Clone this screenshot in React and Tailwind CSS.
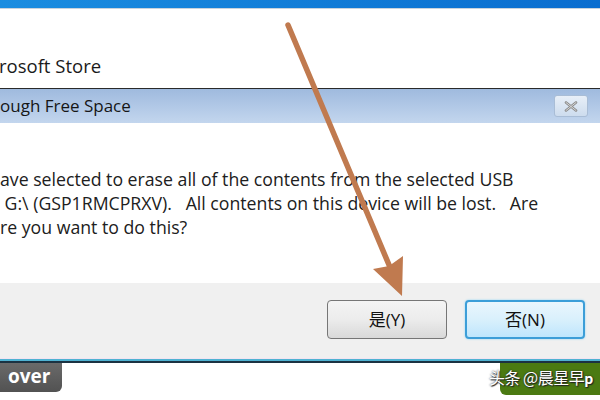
export default function App() {
  const font = { fontFamily: '"Open Sans", "Noto Sans CJK SC", sans-serif' };
  return (
    <div className="relative w-[600px] h-[400px] overflow-hidden bg-white flex flex-col" style={font}>
      <div className="h-[8px] bg-gradient-to-r from-[#1b8de0] to-[#0a6dcf]" />
      <div className="h-px bg-[#c9d3dc]" />
      <div className="h-[79px] flex items-end pb-[10px]">
        <span className="text-[18.5px] leading-[24px] text-[#1a1a1a] -ml-[1px]">rosoft Store</span>
      </div>
      <div className="h-px bg-[#2a2a2a]" />
      <div className="h-[34px] bg-gradient-to-b from-[#9fbade] to-[#c3d6ee] flex items-center justify-between pr-[12px]">
        <span className="text-[17px] leading-[22px] text-[#161616]">ough Free Space</span>
        <div className="w-[34px] h-[22px] rounded-[3px] border border-[#a9bdd6] bg-gradient-to-b from-[#e8eff8] to-[#cddcee] flex items-center justify-center">
          <svg width="14" height="11" viewBox="0 0 14 11">
            <path d="M2 1.5 L12 9.5 M12 1.5 L2 9.5" stroke="#8c8c8c" strokeWidth="2.6" strokeLinecap="round" />
            <path d="M2 1.5 L12 9.5 M12 1.5 L2 9.5" stroke="#dcdcdc" strokeWidth="0.9" strokeLinecap="round" />
          </svg>
        </div>
      </div>
      <div className="h-[160px] pt-[44px] text-[17.7px] leading-[24px] text-[#202020] whitespace-pre">
        <div>ave selected to erase all of the contents from the selected USB</div>
        <div> G:\ (GSP1RMCPRXV).   All contents on this device will be lost.   Are</div>
        <div>re you want to do this?</div>
      </div>
      <div className="h-[75px] bg-[#f0f0f0] flex justify-end items-start pt-[17px] pr-[15px] gap-[18px]">
        <div className="w-[120px] h-[39px] rounded-[4px] border border-[#767676] bg-gradient-to-b from-[#f4f4f4] via-[#ececec] to-[#d9d9d9] flex items-center justify-center text-[17px] text-[#111]">
          是(Y)
        </div>
        <div className="w-[120px] h-[39px] rounded-[4px] border-2 border-[#3c9ed8] bg-gradient-to-b from-[#eaf6fd] via-[#d9f0fc] to-[#bee6fd] flex items-center justify-center text-[17px] text-[#111] shadow-[0_0_2px_#7fd0f5]">
          否(N)
        </div>
      </div>
      <div className="h-px bg-[#f2e4f2]" />
      <div className="h-[2px] bg-[#4fb2d2]" />
      <div className="h-[2px] bg-[#1b3242]" />
      <div className="flex-1 flex justify-between items-start relative">
        <div className="w-[62px] h-[29px] rounded-br-[6px] bg-gradient-to-b from-[#6a6a6a] to-[#525252] flex items-center pl-[8px]">
          <span className="text-[19px] font-bold text-white leading-none -mt-[3px]">over</span>
        </div>
        <div className="w-[100px] h-[32px] rounded-bl-[6px] bg-[#4b7a12]" />
        <span
          className="absolute left-[489px] top-[3px] text-[16px] leading-[22px] text-white whitespace-pre tracking-[-0.5px]"
          style={{ fontFamily: '"Noto Sans CJK SC", sans-serif', textShadow: '0 0 2px #222, 1px 1px 1px #222' }}
        >
          头条 @晨星早<span className="font-bold text-[14px]">p</span>
        </span>
      </div>
      <svg className="absolute left-0 top-0 pointer-events-none" width="600" height="400" viewBox="0 0 600 400">
        <line x1="288" y1="25" x2="392" y2="272" stroke="#c07a4f" strokeWidth="5.5" strokeLinecap="round" />
        <path d="M402 296 L373 269 L389 266 L403 256 Z" fill="#c07a4f" />
      </svg>
    </div>
  );
}
